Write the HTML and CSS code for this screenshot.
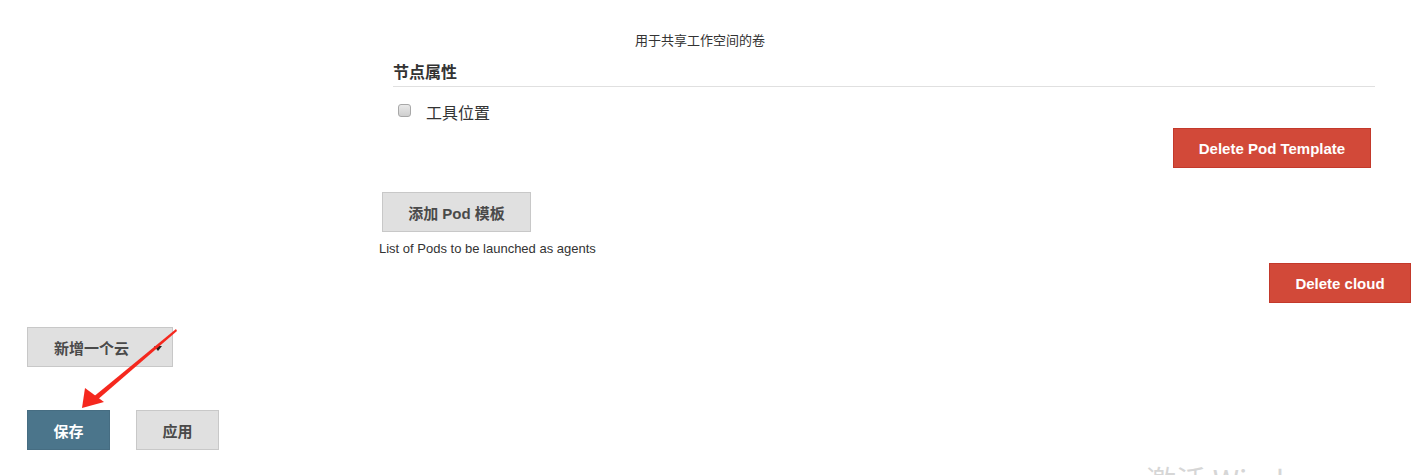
FILE: index.html
```html
<!DOCTYPE html>
<html lang="zh">
<head>
<meta charset="utf-8">
<title>Cloud</title>
<link rel="stylesheet" href="styles.css">
</head>
<body>
<div class="page">
  <div class="cloud">
    <div class="pod">
      <div class="desc">用于共享工作空间的卷</div>
      <div class="section-head">节点属性</div>
      <label class="check-row"><input type="checkbox" class="cb"><span class="check-label">工具位置</span></label>
      <div class="right-row pod-del-row"><button class="btn btn-red btn-del-pod">Delete Pod Template</button></div>
    </div>
    <button class="btn btn-gray btn-add-pod">添加 Pod 模板</button>
    <div class="help">List of Pods to be launched as agents</div>
    <div class="right-row cloud-del-row"><button class="btn btn-red btn-del-cloud">Delete cloud</button></div>
  </div>
  <div class="bottom">
    <button class="btn btn-gray btn-new-cloud">新增一个云<span class="caret"></span></button>
    <div class="actions">
      <button class="btn btn-blue btn-save">保存</button>
      <button class="btn btn-gray btn-apply">应用</button>
    </div>
  </div>
</div>
<svg class="arrow" width="200" height="100" viewBox="0 0 200 100">
  <polygon points="176,0 177,2 96,72 92,69" fill="#f5281e"/>
  <polygon points="82,79 85,59 104,73" fill="#f5281e"/>
</svg>
<div class="watermark">激活 Windows</div>
</body>
</html>
```
FILE: styles.css
```css
* { box-sizing: border-box; }
html, body { margin: 0; padding: 0; background: #fff; }
body {
  font-family: "Liberation Sans", "Noto Sans CJK SC", sans-serif;
  color: #333;
  width: 1427px;
  height: 475px;
  overflow: hidden;
  position: relative;
}
.page { display: flex; flex-direction: column; }
.cloud {
  margin-left: 379px;
  width: 1032px;
  display: flex;
  flex-direction: column;
  align-items: flex-start;
}
.pod {
  margin-left: 14px;
  width: 982px;
  display: flex;
  flex-direction: column;
}
.desc {
  margin-top: 32px;
  padding-left: 242px;
  font-size: 13px;
  line-height: 16px;
  color: #333;
  font-family: "Noto Sans CJK SC", sans-serif;
}
.section-head {
  margin-top: 12px;
  font-size: 16px;
  line-height: 22px;
  font-weight: bold;
  padding-bottom: 4px;
  border-bottom: 1px solid #e0e0e0;
  color: #333;
  font-family: "Noto Sans CJK SC", sans-serif;
}
.check-row {
  display: flex;
  align-items: center;
  height: 22px;
  margin-top: 14px;
}
.cb {
  appearance: none;
  -webkit-appearance: none;
  width: 13px;
  height: 13px;
  margin: -3px 0 0 5px;
  border: 1px solid #a8a8a8;
  border-radius: 3px;
  background: linear-gradient(#e9e9e9, #cfcfcf);
}
.check-label {
  margin-left: 15px;
  font-size: 16px;
  color: #333;
  font-family: "Noto Sans CJK SC", sans-serif;
}
.right-row { display: flex; justify-content: flex-end; width: 100%; }
.pod-del-row { margin-top: 5px; padding-right: 4px; }
.btn {
  height: 40px;
  font-family: "Liberation Sans", "Noto Sans CJK SC", sans-serif;
  font-size: 15px;
  font-weight: bold;
  border-radius: 0;
  padding: 0;
  display: flex;
  align-items: center;
  justify-content: center;
  cursor: pointer;
}
.btn-red {
  background: #d24939;
  border: 1px solid #c3392b;
  color: #fff;
}
.btn-gray {
  background: #e0e0e0;
  border: 1px solid #c8c8c8;
  color: #4a4a4a;
}
.btn-blue {
  background: #4b758b;
  border: 1px solid #466d82;
  color: #fff;
}
.btn-del-pod { width: 198px; }
.btn-add-pod { width: 149px; margin-top: 24px; margin-left: 3px; }
.help {
  margin-top: 9px;
  font-size: 13px;
  line-height: 16px;
  color: #333;
}
.cloud-del-row { margin-top: 6px; }
.btn-del-cloud { width: 142px; }
.bottom {
  margin-left: 27px;
  display: flex;
  flex-direction: column;
  align-items: flex-start;
}
.btn-new-cloud {
  width: 146px;
  margin-top: 24px;
  justify-content: flex-start;
  padding-left: 26px;
  position: relative;
}
.caret {
  position: absolute;
  left: 126px;
  top: 18px;
  width: 0;
  height: 0;
  border-left: 4px solid transparent;
  border-right: 4px solid transparent;
  border-top: 5px solid #222;
}
.actions { display: flex; gap: 26px; margin-top: 43px; }
.btn-save { width: 83px; }
.btn-apply { width: 83px; }
.arrow {
  position: absolute;
  left: 0;
  top: 329px;
}
.watermark {
  position: absolute;
  left: 1146px;
  top: 464px;
  font-size: 30px;
  line-height: 30px;
  color: #d6d6d6;
  font-family: "Noto Sans CJK SC", sans-serif;
  white-space: nowrap;
}
```
